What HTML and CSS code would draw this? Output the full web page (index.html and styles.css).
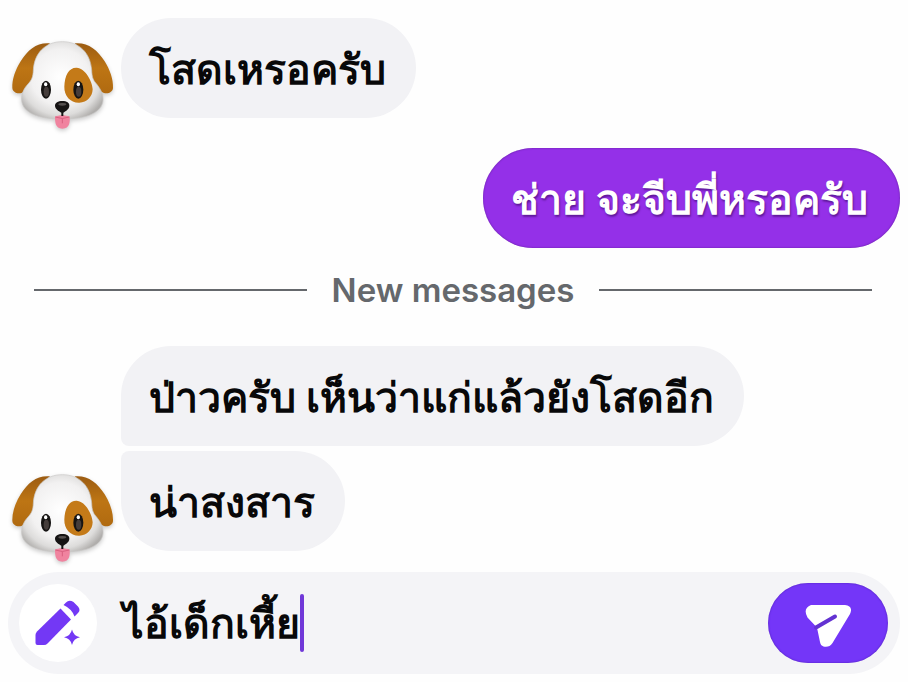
FILE: index.html
```html
<!DOCTYPE html>
<html lang="th">
<head>
  <meta charset="UTF-8">
  <meta name="viewport" content="width=device-width, initial-scale=1">
  <title>Chat</title>
  <link rel="stylesheet" href="styles.css">
</head>
<body>

  <!-- dog avatar, used by every received group -->
  <svg class="defs" width="0" height="0" aria-hidden="true">
    <defs>
      <radialGradient id="fur" cx="48%" cy="46%" r="60%">
        <stop offset="0" stop-color="#ffffff"/>
        <stop offset="0.6" stop-color="#f2f1f1"/>
        <stop offset="0.82" stop-color="#dddcdb"/>
        <stop offset="1" stop-color="#b0aeac"/>
      </radialGradient>
      <linearGradient id="ear" x1="0" y1="0" x2="0" y2="1">
        <stop offset="0" stop-color="#9c5c12"/>
        <stop offset="0.5" stop-color="#bd7514"/>
        <stop offset="1" stop-color="#b06a10"/>
      </linearGradient>
      <symbol id="dog" viewBox="24 54 330 288">
        <path fill="url(#ear)" d="M150 70C112 66 84 88 62 124C46 150 36 178 37 204C38 216 50 222 64 219C84 210 110 194 112 172C108 130 124 92 150 70Z"/>
        <path fill="url(#ear)" d="M224 70C262 66 292 88 314 124C330 150 340 178 339 204C338 216 326 222 312 219C292 210 266 194 264 172C268 130 252 92 224 70Z"/>
        <path fill="url(#fur)" stroke="#c9c7c6" stroke-width="2" d="M187 65C137 65 103 98 100 150C99 172 95 180 84 192C70 207 64 224 65 240C67 276 110 297 187 297C264 297 307 276 309 240C310 222 302 207 288 190C278 178 276 170 275 150C271 98 237 65 187 65Z"/>
        <path fill="#c47a18" d="M230 143C207 142 194 166 193 200C192 228 212 249 238 248C262 247 277 230 278 208C278 186 256 144 230 143Z"/>
        <ellipse cx="138" cy="209" rx="15" ry="27" fill="#161413"/>
        <ellipse cx="235" cy="209" rx="15" ry="27" fill="#161413"/>
        <ellipse cx="139" cy="215" rx="8" ry="15" fill="#453d3b"/>
        <ellipse cx="236" cy="215" rx="8" ry="15" fill="#453d3b"/>
        <ellipse cx="137" cy="193" rx="5" ry="6" fill="#fff"/>
        <ellipse cx="235" cy="193" rx="5" ry="6" fill="#fff"/>
        <path fill="#f0839f" d="M165 290C176 284 196 284 209 290C210 304 210 325 187 326C165 325 165 304 165 290Z"/>
        <path fill="none" stroke="#d8607f" stroke-width="3" d="M166 291Q187 300 208 291M187 296V310"/>
        <path fill="#151313" d="M187 243C200 243 209 248 208 258C207 269 196 274 190 278V288H184V278C178 274 166 269 165 258C165 248 174 243 187 243Z"/>
        <ellipse cx="187" cy="253" rx="12" ry="4" fill="#55504f"/>
      </symbol>
    </defs>
  </svg>

  <div class="chat">
    <main class="messages">
      <div class="row received">
        <svg class="avatar" role="img" aria-label="Dog"><use href="#dog"/></svg>
        <p class="bubble">โสดเหรอครับ</p>
      </div>

      <div class="row sent">
        <p class="bubble">ช่าย จะจีบพี่หรอครับ</p>
      </div>

      <div class="divider">New messages</div>

      <div class="row received">
        <div class="avatar-space"></div>
        <p class="bubble first">ป่าวครับ เห็นว่าแก่แล้วยังโสดอีก</p>
      </div>
      <div class="row received">
        <svg class="avatar" role="img" aria-label="Dog"><use href="#dog"/></svg>
        <p class="bubble last">น่าสงสาร</p>
      </div>
    </main>

    <!-- message box -->
    <form class="composer">
      <button type="button" class="write" aria-label="Write with AI">
        <svg width="46" height="46" viewBox="0 0 46 46" fill="#7338f5">
          <path d="M25.500 8.500L36 19.500L12.500 43.500Q11 45 9 45H2.500Q0.500 45 0.500 43V35Q0.500 33 2 31.500Z"/>
          <path d="M28.500 5L31 2.500Q34-0.500 38.500 2L43 6.500Q46 10 43 13L39.500 16.500Q37 9 28.500 5Z"/>
          <path d="M37 29.500Q38.500 36 45 37.300Q38.500 38.500 37 45Q35.500 38.500 29 37.300Q35.500 36 37 29.500Z"/>
        </svg>
      </button>
      <label class="field">
        <input type="text" class="text" aria-label="Message" value="ไอ้เด็กเหี้ย">
        <span class="caret"></span>
      </label>
      <button type="submit" class="send" aria-label="Send">
        <svg width="46" height="50" viewBox="0 -6 46 50">
          <path fill="#fff" d="M6 1H40Q48.500 2 45 10L27.500 39Q24 44 18.500 42.500Q15.500 41.500 15 38L12.500 26Q12 24 11 22.500L2.500 13.500Q-2.500 4.500 6 1Z"/>
          <path fill="none" stroke="#6332d2" stroke-width="4" stroke-linecap="round" d="M11 23.500L30 12.500"/>
        </svg>
      </button>
    </form>
  </div>

</body>
</html>
```
FILE: styles.css
```css
* {
  box-sizing: border-box;
}

body {
  margin: 0;
  background-color: #fefefe;
  color: #080809;
  font-family: Inter, "Noto Sans", "Liberation Sans", sans-serif;
}

.defs {
  display: block;
}

.chat {
  display: flex;
  flex-direction: column;
  min-height: 100vh;
  padding: 18px 8px 6px;
}

.messages {
  display: flex;
  flex-direction: column;
}

.row {
  display: flex;
  align-items: flex-start;
  gap: 3px;
}

.avatar,
.avatar-space {
  flex: none;
  width: 110px;
}

.avatar {
  height: 96px;
  margin-top: 20px;
  filter: drop-shadow(0 2px 2px rgba(0, 0, 0, 0.2));
}

.bubble {
  margin: 0;
  padding: 23px 30px 21px 28px;
  border-radius: 50px;
  background-color: #f2f2f5;
  font-size: 41px;
  font-weight: 600;
  line-height: 56px;
}

.first {
  border-bottom-left-radius: 8px;
  margin-bottom: 5px;
}

.last {
  border-top-left-radius: 8px;
}

.sent {
  justify-content: flex-end;
  margin-top: 14px;
}

.sent .bubble {
  padding-right: 32px;
  background-color: #9430e8;
  color: #fff;
  box-shadow: inset 0 0 2px #5c1c96;
  text-shadow: 1px 2px 2px rgba(60, 10, 100, 0.6);
}

/* line - text - line */
.divider {
  display: flex;
  align-items: center;
  gap: 25px;
  margin: 22px 28px 36px 26px;
  color: #65686c;
  font-size: 33px;
  font-weight: 600;
  line-height: 40px;
}

.divider::before,
.divider::after {
  content: "";
  flex: 1;
  height: 2px;
  background-color: #65686c;
}

.composer {
  display: flex;
  align-items: center;
  margin-top: 5px;
  padding: 11px 12px 11px 11px;
  border-radius: 52px;
  background-color: #f4f4f7;
}

button {
  display: flex;
  align-items: center;
  justify-content: center;
  flex: none;
  padding: 0;
  border: none;
  cursor: pointer;
}

.write {
  width: 78px;
  height: 78px;
  border-radius: 50%;
  background-color: #fff;
}

.send {
  width: 120px;
  height: 80px;
  border-radius: 40px;
  background-color: #7436f8;
  box-shadow: inset 0 0 2px #4a1fb0;
}

.field {
  display: flex;
  align-items: center;
  flex: 1;
  min-width: 0;
  padding-left: 22px;
}

.text {
  field-sizing: content;
  min-width: 0;
  padding: 0;
  border: none;
  outline: none;
  background: none;
  color: #080809;
  font-family: inherit;
  font-size: 41px;
  font-weight: 600;
  line-height: 80px;
  text-indent: 4px;
}

.caret {
  flex: none;
  width: 4px;
  height: 58px;
  border-radius: 2px;
  background-color: #7038d8;
}
```
